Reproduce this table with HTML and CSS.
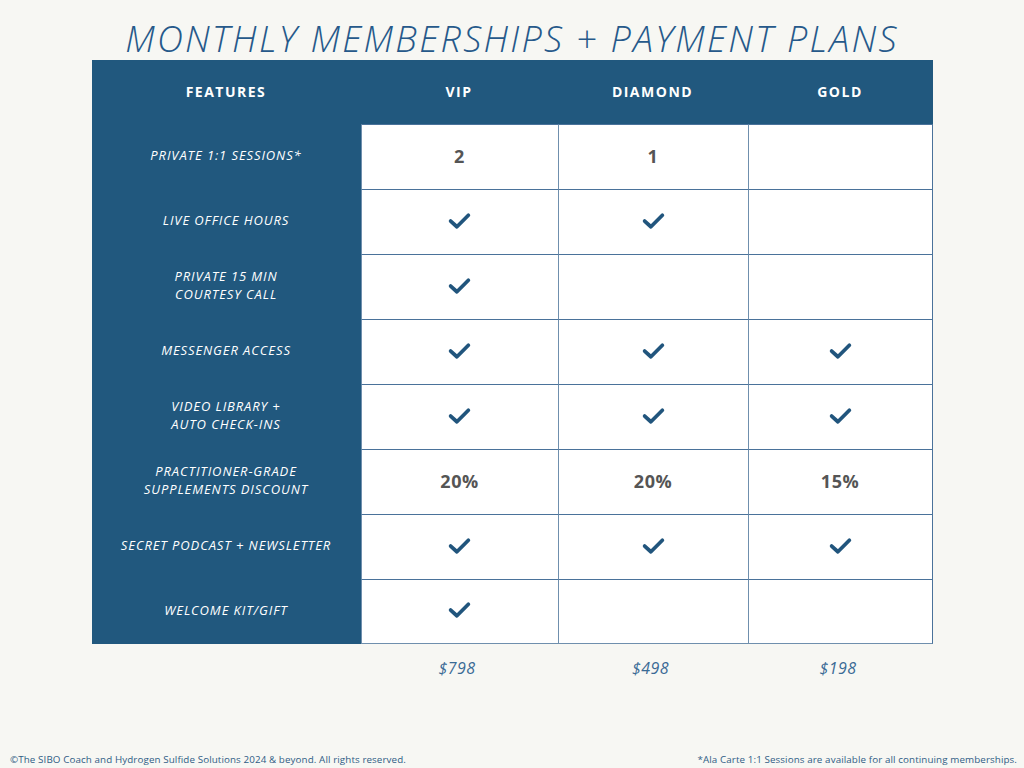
FILE: index.html
```html
<!DOCTYPE html>
<html>
<head>
<meta charset="utf-8">
<link rel="stylesheet" href="styles.css">
</head>
<body>
<div class="page">
  <h1 class="title">MONTHLY MEMBERSHIPS + PAYMENT PLANS</h1>
  <div class="table">
    <div class="hcell">FEATURES</div>
    <div class="hcell">VIP</div>
    <div class="hcell">DIAMOND</div>
    <div class="hcell">GOLD</div>

    <div class="fcell">PRIVATE 1:1 SESSIONS*</div>
    <div class="dcell num">2</div>
    <div class="dcell num">1</div>
    <div class="dcell last"></div>

    <div class="fcell">LIVE OFFICE HOURS</div>
    <div class="dcell"><svg class="chk" viewBox="0 0 24 18"><path d="M3.5 9.5 L9.5 15 L20.5 4"/></svg></div>
    <div class="dcell"><svg class="chk" viewBox="0 0 24 18"><path d="M3.5 9.5 L9.5 15 L20.5 4"/></svg></div>
    <div class="dcell last"></div>

    <div class="fcell">PRIVATE 15 MIN<br>COURTESY CALL</div>
    <div class="dcell"><svg class="chk" viewBox="0 0 24 18"><path d="M3.5 9.5 L9.5 15 L20.5 4"/></svg></div>
    <div class="dcell"></div>
    <div class="dcell last"></div>

    <div class="fcell">MESSENGER ACCESS</div>
    <div class="dcell"><svg class="chk" viewBox="0 0 24 18"><path d="M3.5 9.5 L9.5 15 L20.5 4"/></svg></div>
    <div class="dcell"><svg class="chk" viewBox="0 0 24 18"><path d="M3.5 9.5 L9.5 15 L20.5 4"/></svg></div>
    <div class="dcell last"><svg class="chk" viewBox="0 0 24 18"><path d="M3.5 9.5 L9.5 15 L20.5 4"/></svg></div>

    <div class="fcell">VIDEO LIBRARY +<br>AUTO CHECK-INS</div>
    <div class="dcell"><svg class="chk" viewBox="0 0 24 18"><path d="M3.5 9.5 L9.5 15 L20.5 4"/></svg></div>
    <div class="dcell"><svg class="chk" viewBox="0 0 24 18"><path d="M3.5 9.5 L9.5 15 L20.5 4"/></svg></div>
    <div class="dcell last"><svg class="chk" viewBox="0 0 24 18"><path d="M3.5 9.5 L9.5 15 L20.5 4"/></svg></div>

    <div class="fcell">PRACTITIONER-GRADE<br>SUPPLEMENTS DISCOUNT</div>
    <div class="dcell num">20%</div>
    <div class="dcell num">20%</div>
    <div class="dcell num last">15%</div>

    <div class="fcell">SECRET PODCAST + NEWSLETTER</div>
    <div class="dcell"><svg class="chk" viewBox="0 0 24 18"><path d="M3.5 9.5 L9.5 15 L20.5 4"/></svg></div>
    <div class="dcell"><svg class="chk" viewBox="0 0 24 18"><path d="M3.5 9.5 L9.5 15 L20.5 4"/></svg></div>
    <div class="dcell last"><svg class="chk" viewBox="0 0 24 18"><path d="M3.5 9.5 L9.5 15 L20.5 4"/></svg></div>

    <div class="fcell">WELCOME KIT/GIFT</div>
    <div class="dcell"><svg class="chk" viewBox="0 0 24 18"><path d="M3.5 9.5 L9.5 15 L20.5 4"/></svg></div>
    <div class="dcell"></div>
    <div class="dcell last"></div>
  </div>
  <div class="prices">
    <div></div>
    <div class="price">$798</div>
    <div class="price">$498</div>
    <div class="price">$198</div>
  </div>
  <div class="footer">
    <span>©The SIBO Coach and Hydrogen Sulfide Solutions 2024 &amp; beyond. All rights reserved.</span>
    <span>*Ala Carte 1:1 Sessions are available for all continuing memberships.</span>
  </div>
</div>
</body>
</html>
```

FILE: styles.css
```css
* { box-sizing: border-box; }
html, body { margin: 0; padding: 0; }
body {
  background: #f7f7f3;
  font-family: "Open Sans", "DejaVu Sans", sans-serif;
}
.page {
  width: 1024px;
  height: 768px;
  display: flex;
  flex-direction: column;
  align-items: center;
}
.title {
  margin: 18px 0 0 0;
  height: 42px;
  font-size: 36px;
  line-height: 42px;
  font-weight: 300;
  font-style: italic;
  color: #26598a;
  letter-spacing: 2.3px;
  white-space: nowrap;
}
.table {
  width: 841px;
  display: grid;
  grid-template-columns: 269px 197px 190px 185px;
  grid-template-rows: 64px repeat(8, 65px);
  background: #21587e;
}
.hcell {
  display: flex;
  align-items: center;
  justify-content: center;
  color: #ffffff;
  font-weight: 700;
  font-size: 14px;
  letter-spacing: 1.5px;
  padding-bottom: 2px;
}
.fcell {
  display: flex;
  align-items: center;
  justify-content: center;
  text-align: center;
  color: #ffffff;
  font-style: italic;
  font-size: 13px;
  line-height: 18px;
  letter-spacing: 0.9px;
  padding-bottom: 3px;
}
.dcell {
  background: #ffffff;
  border-top: 1px solid #4a729a;
  border-left: 1px solid #6f8fad;
  display: flex;
  align-items: center;
  justify-content: center;
}
.dcell.last { border-right: 1px solid #4a729a; }
.table > .dcell:nth-last-child(-n+3) { border-bottom: 1px solid #6f8fad; }
.num {
  color: #555555;
  font-weight: 700;
  font-size: 18px;
  letter-spacing: 0.5px;
  padding-bottom: 3px;
}
.chk {
  width: 25px;
  height: 19px;
  fill: none;
  stroke: #21557d;
  stroke-width: 3.6;
  stroke-linecap: round;
  stroke-linejoin: round;
  margin-bottom: 4px;
}
.prices {
  width: 841px;
  display: grid;
  grid-template-columns: 269px 197px 190px 185px;
  height: 48px;
  align-items: center;
}
.price {
  text-align: center;
  font-style: italic;
  font-size: 16px;
  letter-spacing: 0.5px;
  color: #3a6a95;
  padding-right: 4px;
}
.footer {
  margin-top: auto;
  width: 100%;
  display: flex;
  justify-content: space-between;
  padding: 0 7px 2px 10px;
  font-size: 9.8px;
  line-height: 12px;
  letter-spacing: 0.1px;
  color: #2f5c85;
}
```
